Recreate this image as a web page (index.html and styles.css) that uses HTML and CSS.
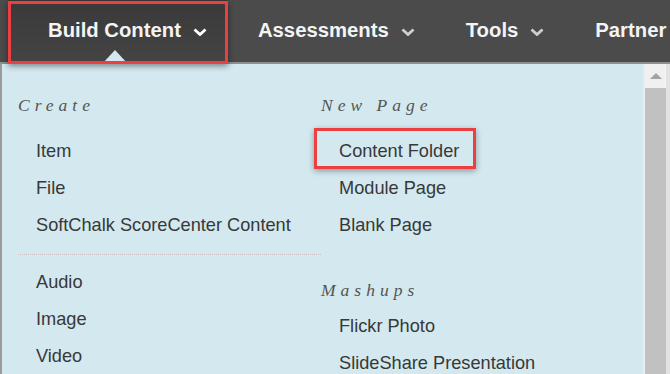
FILE: index.html
```html
<!DOCTYPE html>
<html lang="en">
<head>
    <meta charset="UTF-8">
    <meta name="viewport" content="width=device-width, initial-scale=1.0">
    <title>Build Content</title>
    <link rel="stylesheet" href="styles.css">
</head>
<body>
    <header class="course-nav">
        <div class="nav-item active">
            <span>Build Content</span>
            <svg class="chevron" viewBox="0 0 14 8" width="14" height="8"><path d="M1.5 1.5 L7 6.5 L12.5 1.5"/></svg>
        </div>
        <div class="nav-item">
            <span>Assessments</span>
            <svg class="chevron" viewBox="0 0 14 8" width="14" height="8"><path d="M1.5 1.5 L7 6.5 L12.5 1.5"/></svg>
        </div>
        <div class="nav-item">
            <span>Tools</span>
            <svg class="chevron" viewBox="0 0 14 8" width="14" height="8"><path d="M1.5 1.5 L7 6.5 L12.5 1.5"/></svg>
        </div>
        <div class="nav-item">
            <span>Partner</span>
        </div>
    </header>

    <div class="panel">
        <div class="panel-body">
            <div class="column first">
                <h2 class="section-title">Create</h2>
                <ul class="item-list">
                    <li>Item</li>
                    <li>File</li>
                    <li>SoftChalk ScoreCenter Content</li>
                </ul>
                <hr class="divider">
                <ul class="item-list after-divider">
                    <li>Audio</li>
                    <li>Image</li>
                    <li>Video</li>
                </ul>
            </div>
            <div class="column">
                <h2 class="section-title">New Page</h2>
                <ul class="item-list">
                    <li class="highlight">Content Folder</li>
                    <li>Module Page</li>
                    <li>Blank Page</li>
                </ul>
                <h2 class="section-title later">Mashups</h2>
                <ul class="item-list tight">
                    <li>Flickr Photo</li>
                    <li>SlideShare Presentation</li>
                </ul>
            </div>
        </div>
        <div class="scrollbar">
            <div class="scroll-up"><span class="arrow"></span></div>
            <div class="scroll-thumb"></div>
        </div>
    </div>
</body>
</html>
```

FILE: styles.css
```css
html, body {
    margin: 0;
    padding: 0;
    height: 100%;
    overflow: hidden;
}
body {
    font-family: 'Liberation Sans', Arial, sans-serif;
    background-color: #d3e9ef;
}
.course-nav {
    display: flex;
    height: 62px;
    padding-left: 8px;
    background-color: #4b4b4b;
    border-top: 1px solid #595959;
    border-bottom: 2px solid #8e8e8e;
    box-sizing: content-box;
    margin-top: -1px;
}
.nav-item {
    position: relative;
    display: flex;
    align-items: center;
    padding: 0 21px 2px 30px;
    color: #f4f4f4;
    font-size: 20.3px;
    font-weight: bold;
    white-space: nowrap;
}
.nav-item .chevron {
    margin-left: 12px;
    margin-top: 3px;
    fill: none;
    stroke: #cfcfcf;
    stroke-width: 2.8;
}
.nav-item.active {
    padding-left: 40px;
    background: linear-gradient(#393939, #444444);
}
.nav-item.active .chevron {
    stroke: #ffffff;
}
.nav-item.active::before {
    content: "";
    position: absolute;
    left: 95px;
    bottom: -1px;
    border-left: 12px solid transparent;
    border-right: 12px solid transparent;
    border-bottom: 13px solid #d3e9ef;
}
.nav-item.active::after {
    content: "";
    position: absolute;
    top: 1px;
    left: 0;
    right: 0;
    bottom: -2px;
    border: 3px solid #ec4040;
    box-shadow: 0 2px 6px rgba(0, 0, 0, 0.45);
}
.panel {
    display: flex;
    height: 310px;
    border-left: 2px solid #9a9a9a;
}
.panel-body {
    flex: 1;
    display: flex;
    padding: 29px 0 0 16px;
    color: #383838;
}
.column {
    width: 300px;
}
.column.first {
    width: 303px;
}
.section-title {
    margin: 0;
    font-family: 'Liberation Serif', 'Times New Roman', serif;
    font-style: italic;
    font-weight: normal;
    font-size: 17.5px;
    line-height: 24px;
    letter-spacing: 5px;
    color: #555555;
}
.section-title.later {
    margin-top: 34px;
}
.item-list {
    list-style: none;
    margin: 16px 0 0;
    padding: 0;
}
.item-list.after-divider {
    margin-top: 9px;
}
.item-list.tight {
    margin-top: 6px;
}
.item-list li {
    position: relative;
    padding-left: 18px;
    font-size: 18.2px;
    line-height: 37px;
    white-space: nowrap;
}
.item-list li.highlight::after {
    content: "";
    position: absolute;
    top: -5px;
    left: -7px;
    width: 156px;
    height: 35px;
    border: 3px solid #ec4040;
    box-shadow: 0 2px 6px rgba(0, 0, 0, 0.35);
}
.divider {
    margin: 10px 0 0;
    border: none;
    border-top: 1px dotted #cbbfbf;
    height: 0;
}
.scrollbar {
    width: 21px;
    background-color: #f0f0f0;
    border-left: 2px solid #ececec;
    border-right: 4px solid #e2e2e2;
    box-shadow: inset -2px 0 0 #f2f2f2;
}
.scroll-up {
    height: 24px;
    display: flex;
    align-items: center;
    justify-content: center;
}
.scroll-up .arrow {
    border-left: 6px solid transparent;
    border-right: 6px solid transparent;
    border-bottom: 6px solid #a3a3a3;
}
.scroll-thumb {
    height: 300px;
    background-color: #c1c1c1;
}
```
